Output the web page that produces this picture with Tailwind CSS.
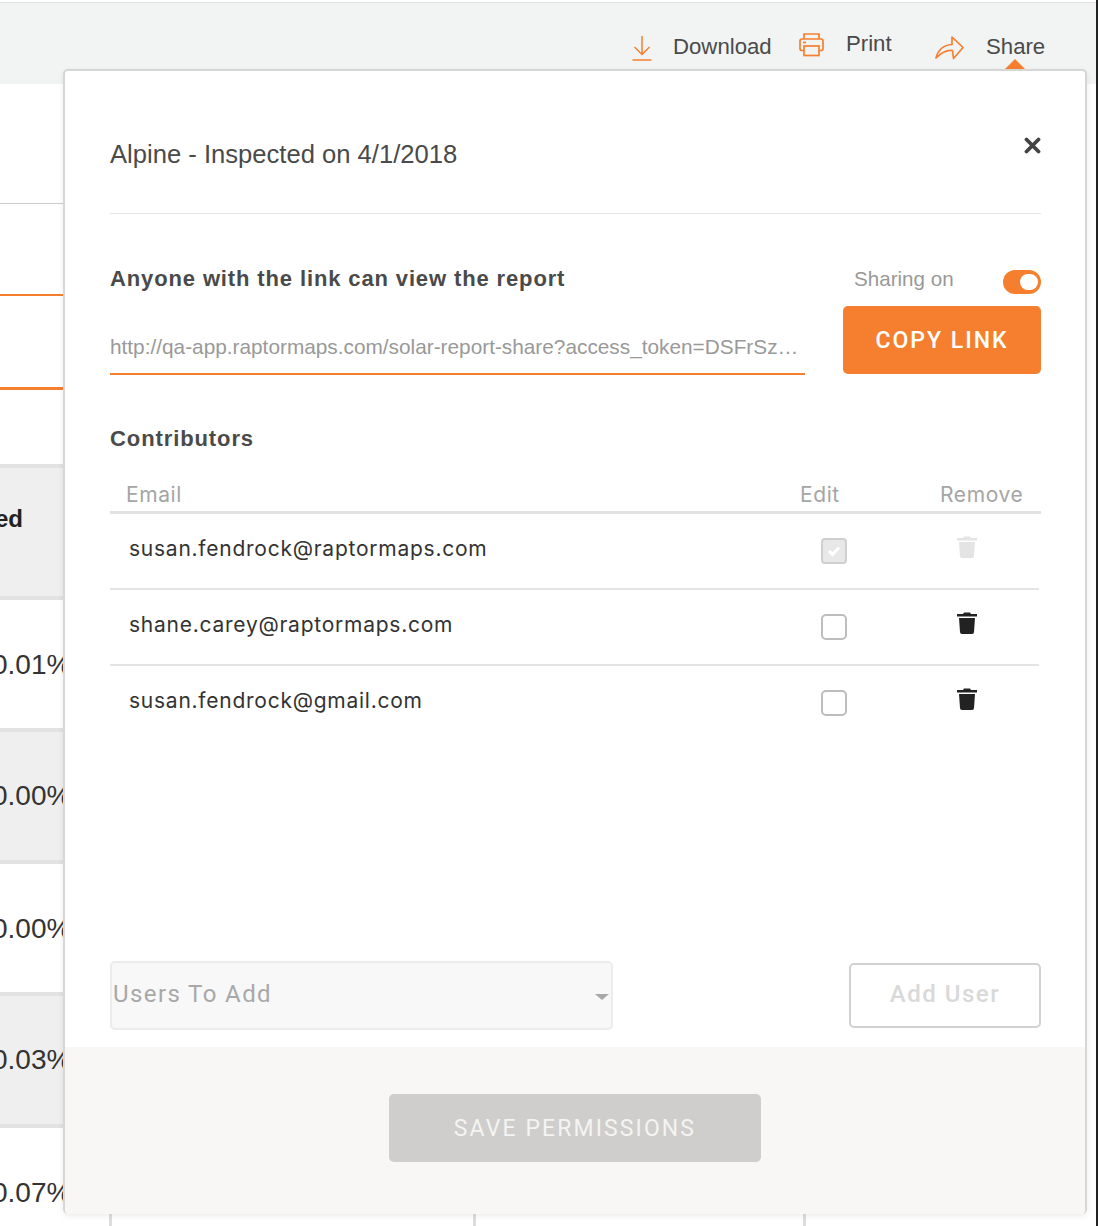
<!DOCTYPE html>
<html lang="en">
<head>
  <meta charset="UTF-8">
  <title>Share report</title>
  <script src="https://cdn.jsdelivr.net/npm/@tailwindcss/browser@4"></script>
</head>
<body class="bg-white font-['Liberation_Sans',sans-serif]">
  <div class="relative w-[1098px] h-[1226px] overflow-hidden bg-white">

    <!-- Page behind the modal -->
    <header class="mt-[2px] h-[82px] w-[1096px] border-t border-[#dddddd] bg-[#f2f4f4] pt-[28px] text-[22.2px] leading-[30px] text-[#4a4a4a]">
      <div class="flex items-start">
        <svg class="ml-[631px] mt-[4px] w-[22px] h-[26px]" viewBox="0 0 22 26" fill="none" stroke="#f67f2f" stroke-width="1.5">
          <path d="M11 1v18M3.500 12 11 19.500 18.500 12"/>
          <path d="M1.500 25h19"/>
        </svg>
        <span class="ml-[20px] mt-[1px] w-[99px]">Download</span>
        <svg class="ml-[27px] mt-[1px] w-[25px] h-[25px]" viewBox="0 0 25 25" fill="none" stroke="#f67f2f" stroke-width="1.700">
          <path d="M5 7V2h15v5"/>
          <rect x="1" y="7" width="23" height="11.500" rx="2"/>
          <rect x="5" y="14" width="15" height="9.500" fill="#f2f4f4"/>
          <path d="M4 10.500h3"/>
        </svg>
        <span class="ml-[22px] -mt-[2px] w-[46px]">Print</span>
        <svg class="ml-[43px] mt-[4px] w-[29px] h-[25px]" viewBox="0 0 29 25" fill="none" stroke="#f67f2f" stroke-width="1.700" stroke-linejoin="round">
          <path d="M1 23C3 15 9 10 17 9.500V2l11 10.500L18.500 23.500 17.500 15.500C11 14.500 6 18 1 23Z"/>
        </svg>
        <span class="ml-[22px] mt-[1px]">Share</span>
      </div>
    </header>

    <main class="w-[64px] overflow-hidden whitespace-nowrap text-[28px] leading-[32px] text-[#333333]">
      <div class="h-[119px] border-b border-[#cccccc] box-content"></div>
      <div class="h-[92px] border-b-2 border-[#f67f2f]"></div>
      <div class="h-[91px] border-b-[3px] border-[#f67f2f] box-content"></div>
      <div class="h-[74px]"></div>
      <div class="h-[136px] border-y-4 border-[#e2e2e2] bg-[#efefef] pt-[35px] text-[24px] font-bold text-[#222222]"><span class="block -ml-[5px]">ed</span></div>
      <div class="h-[128px] pt-[49px]"><span class="block -ml-[8px]">0.01%</span></div>
      <div class="h-[136px] border-y-4 border-[#e2e2e2] bg-[#efefef] pt-[48px]"><span class="block -ml-[8px]">0.00%</span></div>
      <div class="h-[128px] pt-[49px]"><span class="block -ml-[8px]">0.00%</span></div>
      <div class="h-[136px] border-y-4 border-[#e2e2e2] bg-[#efefef] pt-[48px]"><span class="block -ml-[8px]">0.03%</span></div>
      <div class="h-[98px] pt-[49px]"><span class="block -ml-[8px]">0.07%</span></div>
    </main>

    <!-- Dark strip at the right edge -->
    <div class="absolute right-0 top-0 w-[2px] h-full bg-[#222222]"></div>

    <!-- Table column rules under the modal -->
    <div class="absolute left-[109px] top-[1214px] w-[3px] h-[12px] bg-[#dddddd]"></div>
    <div class="absolute left-[473px] top-[1214px] w-[3px] h-[12px] bg-[#dddddd]"></div>
    <div class="absolute left-[803px] top-[1214px] w-[3px] h-[12px] bg-[#dddddd]"></div>

    <!-- Pointer above the modal -->
    <div class="absolute left-[1005px] top-[59px] w-0 h-0 border-x-[10px] border-b-[10px] border-x-transparent border-b-[#f67f2f]"></div>

    <!-- Share modal -->
    <section class="absolute left-[63px] top-[69px] w-[1024px] h-[1145px] rounded-[5px] border-2 border-b-0 border-[#d6d6d6] bg-white shadow-[0_2px_6px_rgba(0,0,0,0.08)] flex flex-col overflow-hidden">
      <div class="flex-1 pl-[45px] pr-[44px]">
        <div class="flex items-start justify-between h-[143px] border-b border-[#e6e6e6] pt-[68px]">
          <h2 class="text-[25.6px] leading-[30px] text-[#4a4a4a]">Alpine - Inspected on 4/1/2018</h2>
          <svg class="-mt-[2px] w-[17px] h-[17px]" viewBox="0 0 17 17" stroke="#444444" stroke-width="3.800" stroke-linecap="round"><path d="M2.500 2.500l12 12M14.500 2.500l-12 12"/></svg>
        </div>

        <div class="flex justify-between mt-[50px]">
          <div class="w-[695px]">
            <p class="text-[22px] leading-[30px] font-bold tracking-[0.87px] text-[#4a4a4a]">Anyone with the link can view the report</p>
            <div class="mt-[35px] h-[46px] border-b-2 border-[#f67f2f] text-[20.800px] leading-[36px] text-[#999999] whitespace-nowrap">http://qa-app.raptormaps.com/solar-report-share?access_token=DSFrSz…</div>
          </div>
          <div class="w-[198px]">
            <div class="flex items-center justify-between h-[30px] mb-[12px] pl-[11px]">
              <span class="text-[20.600px] text-[#999999]">Sharing on</span>
              <span class="flex items-center justify-end w-[38px] h-[24px] mt-[6px] pr-[3px] rounded-full bg-[#f67f2f]"><span class="w-[18px] h-[16px] rounded-full bg-white"></span></span>
            </div>
            <button class="w-[198px] h-[68px] pt-[2px] rounded-[5px] bg-[#f67f2f] font-['Roboto',sans-serif] text-[23px] font-medium tracking-[2px] text-white">COPY LINK</button>
          </div>
        </div>

        <h3 class="mt-[49px] text-[22px] leading-[30px] font-bold tracking-[0.9px] text-[#4a4a4a]">Contributors</h3>

        <div class="mt-[27px] flex h-[30px] items-start border-b-[3px] border-[#e2e2e2] box-content font-['Inter',sans-serif] text-[21px] leading-[28px] tracking-[0.6px] text-[#a5a5a5]">
          <span class="ml-[16px] w-[674px]">Email</span>
          <span class="w-[140px]">Edit</span>
          <span>Remove</span>
        </div>

        <div class="w-[929px] font-['Inter',sans-serif] text-[21px] tracking-[0.75px] text-[#333333]">
          <div class="relative flex h-[76px] items-start border-b-2 border-[#e4e4e4] pl-[19px] pt-[20px] leading-[30px]">
            <span class="w-[692px]">susan.fendrock@raptormaps.com</span>
            <span class="mt-[4px] flex w-[26px] h-[26px] items-center justify-center rounded-[4px] border-2 border-[#cfcfcf] bg-[#e8e8e8]">
              <svg class="w-[14px] h-[12px]" viewBox="0 0 14 12" fill="none" stroke="#ffffff" stroke-width="3"><path d="M2 6l3.500 3.500L12 2.500"/></svg>
            </span>
            <svg class="ml-[110px] mt-[1px] w-[20px] h-[23px]" viewBox="0 0 20 23" fill="#e4e4e4"><path d="M7 1.500h6l1 1.500h6v2.500H0V3h6zM2 7h16l-1 14a2 2 0 0 1-2 2H5a2 2 0 0 1-2-2z"/></svg>
          </div>
          <div class="relative flex h-[76px] items-start border-b-2 border-[#e4e4e4] pl-[19px] pt-[20px] leading-[30px]">
            <span class="w-[692px]">shane.carey@raptormaps.com</span>
            <span class="mt-[4px] w-[26px] h-[26px] rounded-[5px] border-2 border-[#bdbdbd] bg-white"></span>
            <svg class="ml-[110px] mt-[1px] w-[20px] h-[23px]" viewBox="0 0 20 23" fill="#222222"><path d="M7 1.500h6l1 1.500h6v2.500H0V3h6zM2 7h16l-1 14a2 2 0 0 1-2 2H5a2 2 0 0 1-2-2z"/></svg>
          </div>
          <div class="relative flex h-[76px] items-start pl-[19px] pt-[20px] leading-[30px]">
            <span class="w-[692px]">susan.fendrock@gmail.com</span>
            <span class="mt-[4px] w-[26px] h-[26px] rounded-[5px] border-2 border-[#bdbdbd] bg-white"></span>
            <svg class="ml-[110px] mt-[1px] w-[20px] h-[23px]" viewBox="0 0 20 23" fill="#222222"><path d="M7 1.500h6l1 1.500h6v2.500H0V3h6zM2 7h16l-1 14a2 2 0 0 1-2 2H5a2 2 0 0 1-2-2z"/></svg>
          </div>
        </div>

        <div class="mt-[219px] flex items-start justify-between">
          <div class="relative flex w-[503px] h-[69px] items-center rounded-[5px] border-2 border-[#ececec] bg-[#f8f8f8] pl-[1px] pb-[3px] font-['Roboto',sans-serif] text-[24px] tracking-[1.400px] text-[#a8a8a8]">
            Users To Add
            <span class="absolute right-[2px] top-[31px] w-0 h-0 border-x-[7px] border-t-[6px] border-x-transparent border-t-[#a8a8a8]"></span>
          </div>
          <button class="mt-[2px] w-[192px] h-[65px] pb-[3px] rounded-[5px] border-2 border-[#d2d2d2] bg-white font-['Roboto',sans-serif] text-[24px] font-medium tracking-[1.500px] text-[#d9d9d9]">Add User</button>
        </div>
      </div>

      <footer class="flex h-[167px] justify-center bg-[#f8f7f5] pt-[47px]">
        <button class="w-[372px] h-[68px] pt-[2px] rounded-[5px] bg-[#cfcecc] font-['Roboto',sans-serif] text-[23px] tracking-[2.100px] text-[#f4f4f2]">SAVE PERMISSIONS</button>
      </footer>
    </section>
  </div>
</body>
</html>
